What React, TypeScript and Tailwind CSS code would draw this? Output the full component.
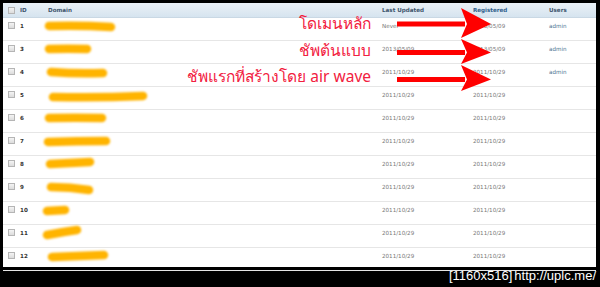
import React from 'react';

type Row = { id: number; updated: string; registered: string; user?: string };

const rows: Row[] = [
  { id: 1, updated: 'Never', registered: '2013/05/09', user: 'admin' },
  { id: 3, updated: '2013/05/09', registered: '2013/05/09', user: 'admin' },
  { id: 4, updated: '2011/10/29', registered: '2011/10/29', user: 'admin' },
  { id: 5, updated: '2011/10/29', registered: '2011/10/29' },
  { id: 6, updated: '2011/10/29', registered: '2011/10/29' },
  { id: 7, updated: '2011/10/29', registered: '2011/10/29' },
  { id: 8, updated: '2011/10/29', registered: '2011/10/29' },
  { id: 9, updated: '2011/10/29', registered: '2011/10/29' },
  { id: 10, updated: '2011/10/29', registered: '2011/10/29' },
  { id: 11, updated: '2011/10/29', registered: '2011/10/29' },
  { id: 12, updated: '2011/10/29', registered: '2011/10/29' },
];

// highlighter strokes hiding the domain names
const blobs = [
  'M49,26 Q80,25 111,27',
  'M49,49 Q68,48.5 87,49',
  'M51,72 Q77,74 103,73',
  'M53,97 Q98,98 143,96',
  'M49,118 Q75,117.5 102,118',
  'M48,142 Q77,141 106,141',
  'M50,164 Q70,163 90,162',
  'M51,187 Q70,187 89,190',
  'M47,211 Q56,210.5 65,210',
  'M47,235 Q62,232 77,230',
  'M52,257 Q78,256 104,255',
];

const arrows = [
  { y: 24, top: 8, bottom: 38 },
  { y: 52.5, top: 39, bottom: 64 },
  { y: 79.5, top: 65, bottom: 91 },
];

function Checkbox() {
  return <div className="w-[7px] h-[7px] border border-[#b5b5b5] bg-gradient-to-b from-[#f4f4f4] to-[#dcdcdc]" />;
}

export default function App() {
  return (
    <div className="relative w-[600px] h-[287px] bg-black overflow-hidden font-['DejaVu_Sans',sans-serif]">
      <div className="pt-[3px] pl-[3px]">
        <div className="w-[593px] h-[264px] bg-white">
          {/* header */}
          <div className="grid grid-cols-[17px_28px_334px_91px_76px_1fr] items-center h-[15px] bg-gradient-to-b from-[#eaf1f7] to-[#d6e4ef] border-b border-[#c9d8e4] text-[5.6px] font-bold text-[#3d546c]">
            <div className="pl-[5px]"><Checkbox /></div>
            <div>ID</div>
            <div>Domain</div>
            <div>Last Updated</div>
            <div className="text-[#2f5f8c]">Registered</div>
            <div>Users</div>
          </div>
          {rows.map((r) => (
            <div
              key={r.id}
              className="grid grid-cols-[17px_28px_334px_91px_76px_1fr] h-[23px] border-b border-[#e6e6e6] pt-[4px] text-[5.6px] text-[#777]"
            >
              <div className="pl-[5px]"><Checkbox /></div>
              <div className="font-bold text-[#333]">{r.id}</div>
              <div />
              <div>{r.updated}</div>
              <div>{r.registered}</div>
              <div className="text-[#4a7391]">{r.user}</div>
            </div>
          ))}
        </div>
      </div>

      {/* annotation overlay */}
      <svg className="absolute left-0 top-0 pointer-events-none" width="600" height="287">
        <defs>
          <filter id="soft" filterUnits="userSpaceOnUse" x="0" y="0" width="600" height="287">
            <feGaussianBlur stdDeviation="0.8" />
          </filter>
        </defs>
        {blobs.map((d, i) => (
          <path key={i} d={d} stroke="#ffb400" strokeWidth="8.5" strokeLinecap="round" fill="none" filter="url(#soft)" />
        ))}
        {arrows.map((a, i) => (
          <g key={i} fill="#ff0000">
            <rect x="397" y={a.y - 2.5} width="68" height="5" />
            <path d={`M461,${a.top} L491,${a.y} L461,${a.bottom} L467,${a.y} Z`} />
          </g>
        ))}
      </svg>

      <div className="absolute left-0 top-0 w-[371px] pointer-events-none text-right text-[#f2203e] text-[15.5px] leading-[26px] font-['Noto_Sans',sans-serif]">
        <div className="mt-[10px]">โดเมนหลัก</div>
        <div className="mt-[1px]">ชัพต้นแบบ</div>
        <div className="mt-[0px]">ชัพแรกที่สร้างโดย air wave</div>
      </div>

      <div className="absolute right-[4px] bottom-[3px] flex gap-[2px] text-white text-[13px] leading-[16px] font-['Liberation_Sans',sans-serif]">
        <span>[1160x516]</span>
        <span>http://uplc.me/</span>
      </div>
    </div>
  );
}
